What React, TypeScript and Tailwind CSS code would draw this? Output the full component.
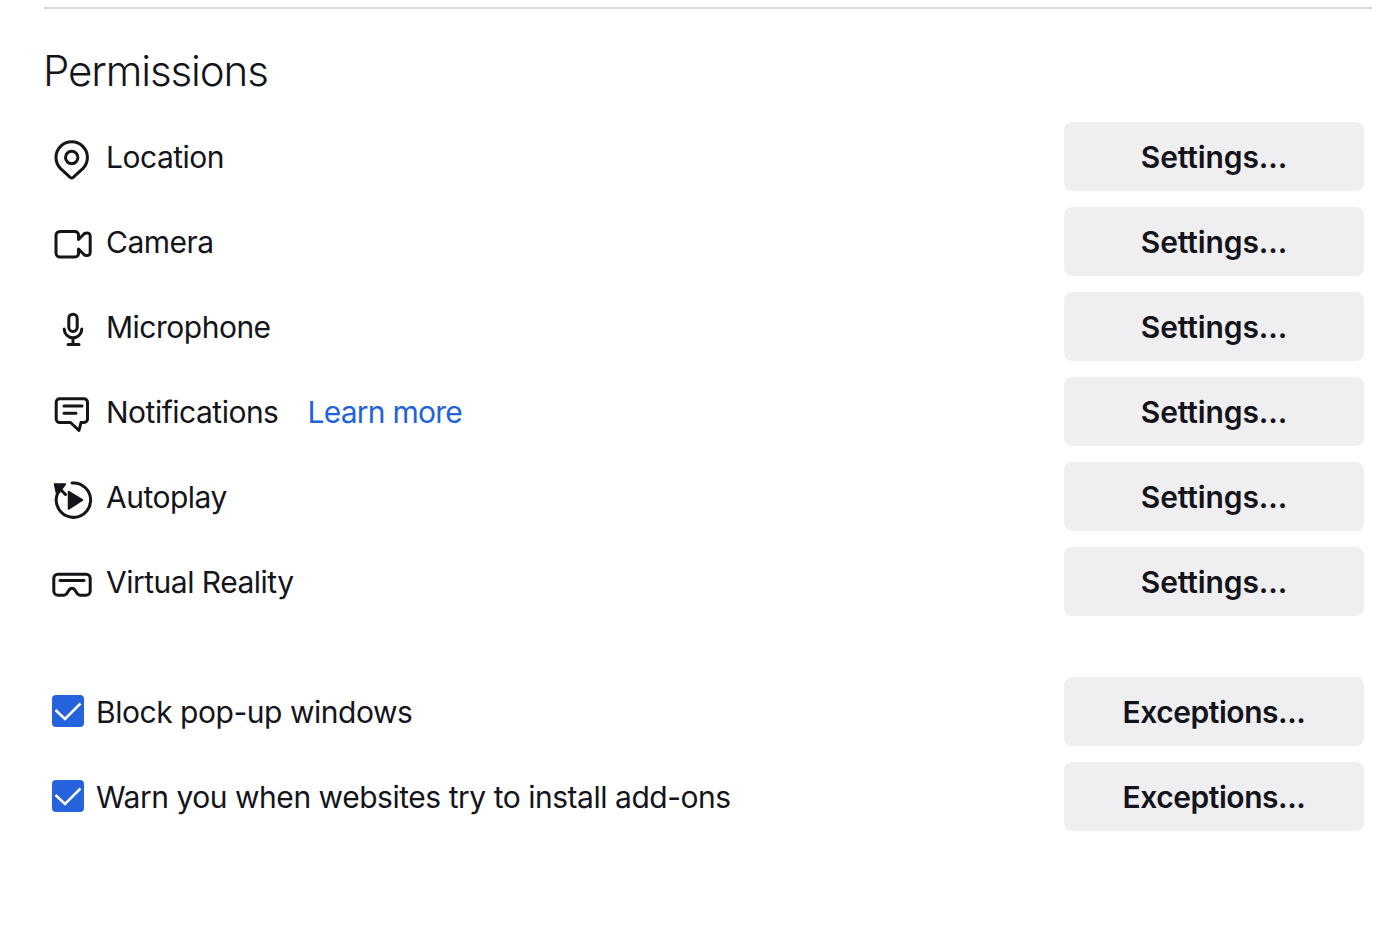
import type { ReactNode } from 'react';

const icons: Record<string, ReactNode> = {
  location: (
    <>
      <path d="M8.6 32.6 18.2 41.4Q19.7 42.6 21.2 41.4L30.8 32.6A15.7 15.7 0 1 0 8.6 32.6Z" />
      <circle cx="19.7" cy="21.5" r="6.2" />
    </>
  ),
  camera: (
    <path d="M8 10.5H23a3.5 3.5 0 0 1 3.5 3.5V18.5L32.5 12.5Q38.2 10.5 38.2 15.5V31Q38.2 36 32.5 34L26.5 28V32.5a3.5 3.5 0 0 1-3.5 3.5H8a4 4 0 0 1-4-4V14.5a4 4 0 0 1 4-4Z" />
  ),
  microphone: (
    <>
      <rect x="16.8" y="8.2" width="8.4" height="17.3" rx="4.2" />
      <path d="M12.2 23a8.8 8.8 0 0 0 17.6 0M21 32V38.5M16 38.5H27" />
    </>
  ),
  notifications: (
    <>
      <path d="M8 7.8H32a3.5 3.5 0 0 1 3.5 3.5V28a3.5 3.5 0 0 1-3.5 3.5H29L27 39.5 18.5 31.5H8A3.5 3.5 0 0 1 4.2 28V11.3A3.5 3.5 0 0 1 8 7.8Z" />
      <path d="M12 15H30M12 22.3H24" />
    </>
  ),
  autoplay: (
    <>
      <path d="M20 7A17.2 17.2 0 1 1 5 19" />
      <path d="M4 9 13.5 18.5" />
      <path d="M2.5 8H13.5L5 19.5Z" fill="currentColor" strokeWidth="1.5" />
      <path d="M16.5 15.5 30.5 24 16.5 33Z" fill="currentColor" strokeWidth="1.5" />
    </>
  ),
  vr: (
    <>
      <path d="M6 13.2H34a4.2 4.2 0 0 1 4.2 4.2V30a4.2 4.2 0 0 1-4.2 4.2H28c-2 0-3-1.5-4-3.5s-2-3.4-4-3.4-3 1.4-4 3.4-2 3.5-4 3.5H6A4.2 4.2 0 0 1 1.8 30V17.4A4.2 4.2 0 0 1 6 13.2Z" />
      <path d="M8 19.5H32" />
    </>
  ),
};

const permissions = [
  { icon: 'location', label: 'Location' },
  { icon: 'camera', label: 'Camera' },
  { icon: 'microphone', label: 'Microphone' },
  { icon: 'notifications', label: 'Notifications', link: 'Learn more' },
  { icon: 'autoplay', label: 'Autoplay' },
  { icon: 'vr', label: 'Virtual Reality' },
];

function RowButton({ label, className }: { label: string; className: string }) {
  return (
    <button className={`w-[300px] h-[69px] pt-[2px] rounded-lg bg-[#efeff2] font-semibold text-[#15141a] ${className}`}>
      {label}
    </button>
  );
}

function CheckRow({ label }: { label: string }) {
  return (
    <div className="flex items-center justify-between">
      <label className="flex items-center gap-[13px]">
        <svg viewBox="0 0 32 32" className="w-8 h-8 mb-px">
          <rect width="32" height="32" rx="4" fill="#2563dd" />
          <path d="M3.5 15 13 24 28.5 8.5" fill="none" stroke="white" strokeWidth="2.5" />
        </svg>
        <span className="pt-[2px] -ml-px tracking-[-0.47px]">{label}</span>
      </label>
      <RowButton label="Exceptions..." className="tracking-[-0.45px]" />
    </div>
  );
}

export default function App() {
  return (
    <div className="h-[934px] bg-white pl-[44px] pr-[24px] pt-[7px] overflow-hidden text-[30px] tracking-[-0.5px] text-[#15141a] font-['Inter',sans-serif]">
      <div className="h-[2px] bg-[#d7d7db]" />

      <h1 className="mt-[34px] text-[42px] leading-[56px] font-light tracking-[-1.1px] -ml-px">Permissions</h1>

      {/* Permission rows */}
      <div className="mt-[23px] px-2 flex flex-col gap-4">
        {permissions.map((p) => (
          <div key={p.label} className="flex items-center justify-between">
            <div className="flex items-center gap-[15px]">
              <svg
                viewBox="0 0 40 41"
                className="w-10 h-[41px] overflow-visible"
                fill="none"
                stroke="currentColor"
                strokeWidth="3"
                strokeLinecap="round"
                strokeLinejoin="round"
              >
                {icons[p.icon]}
              </svg>
              <span className="pt-[2px] -ml-px">{p.label}</span>
              {p.link && <a className="pt-[2px] ml-[14px] tracking-[-0.75px] text-[#1f62e0]">{p.link}</a>}
            </div>
            <RowButton label="Settings..." className="tracking-[-0.1px]" />
          </div>
        ))}
      </div>

      {/* Popups and add-ons */}
      <div className="mt-[61px] px-2 flex flex-col gap-4">
        <CheckRow label="Block pop-up windows" />
        <CheckRow label="Warn you when websites try to install add-ons" />
      </div>
    </div>
  );
}
